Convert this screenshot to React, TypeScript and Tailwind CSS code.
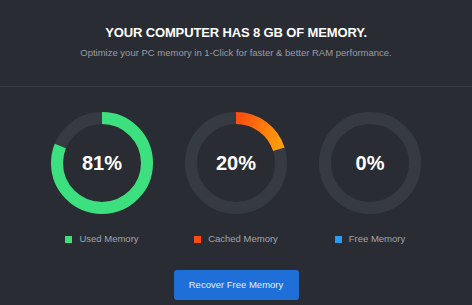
import React from "react";

const rings = [
  { value: 81, label: "Used Memory", color: "#3de07e", swatch: "bg-[#3de07e]" },
  { value: 20, label: "Cached Memory", color: "url(#orange)", swatch: "bg-[#ff4a12]" },
  { value: 0, label: "Free Memory", color: "#2f9bf0", swatch: "bg-[#2f9bf0]" },
];

const Ring = ({ value, color }: { value: number; color: string }) => {
  const r = 45;
  const c = 2 * Math.PI * r;
  return (
    <div className="relative w-[104px] h-[104px]">
      <svg width="104" height="104" viewBox="0 0 104 104" className="-rotate-90">
        <defs>
          <linearGradient id="orange" gradientUnits="userSpaceOnUse" x1="97" y1="40" x2="70" y2="95">
            <stop offset="0%" stopColor="#ff3a0e" />
            <stop offset="100%" stopColor="#ff9d0c" />
          </linearGradient>
        </defs>
        <circle cx="52" cy="52" r={r} fill="none" stroke="#363a42" strokeWidth="12" />
        {value > 0 && (
          <circle
            cx="52"
            cy="52"
            r={r}
            fill="none"
            stroke={color}
            strokeWidth="12"
            strokeDasharray={`${(c * value) / 100} ${c}`}
          />
        )}
      </svg>
      <div className="absolute inset-0 flex items-center justify-center text-white text-[20px] font-bold">
        {value}%
      </div>
    </div>
  );
};

export default function App() {
  return (
    <div className="w-[472px] h-[305px] overflow-hidden bg-[#2a2c33] font-['Liberation_Sans',Arial,sans-serif]">
      <div className="h-[87px] flex flex-col items-center pt-[25px] border-b border-[#3a3d45]">
        <h1 className="text-white text-[13px] font-bold leading-4 tracking-[-0.01em]">
          YOUR COMPUTER HAS 8 GB OF MEMORY.
        </h1>
        <p className="mt-[6px] text-[#9a9ca3] text-[9.5px] leading-3">
          Optimize your PC memory in 1-Click for faster &amp; better RAM performance.
        </p>
      </div>
      <div className="flex justify-center gap-[30px] pt-[24px]">
        {rings.map((r) => (
          <div key={r.label} className="flex flex-col items-center w-[104px]">
            <Ring value={r.value} color={r.color} />
            <div className="mt-[17px] flex items-center gap-[7px] whitespace-nowrap">
              <span className={`w-[7px] h-[7px] ${r.swatch}`} />
              <span className="text-[#a3a5ac] text-[9.5px]">{r.label}</span>
            </div>
          </div>
        ))}
      </div>
      <div className="flex justify-center mt-[24px]">
        <button className="w-[125px] h-[30px] rounded-[3px] bg-[#1f6fd9] text-[#e6eefb] text-[9.5px]">
          Recover Free Memory
        </button>
      </div>
    </div>
  );
}
